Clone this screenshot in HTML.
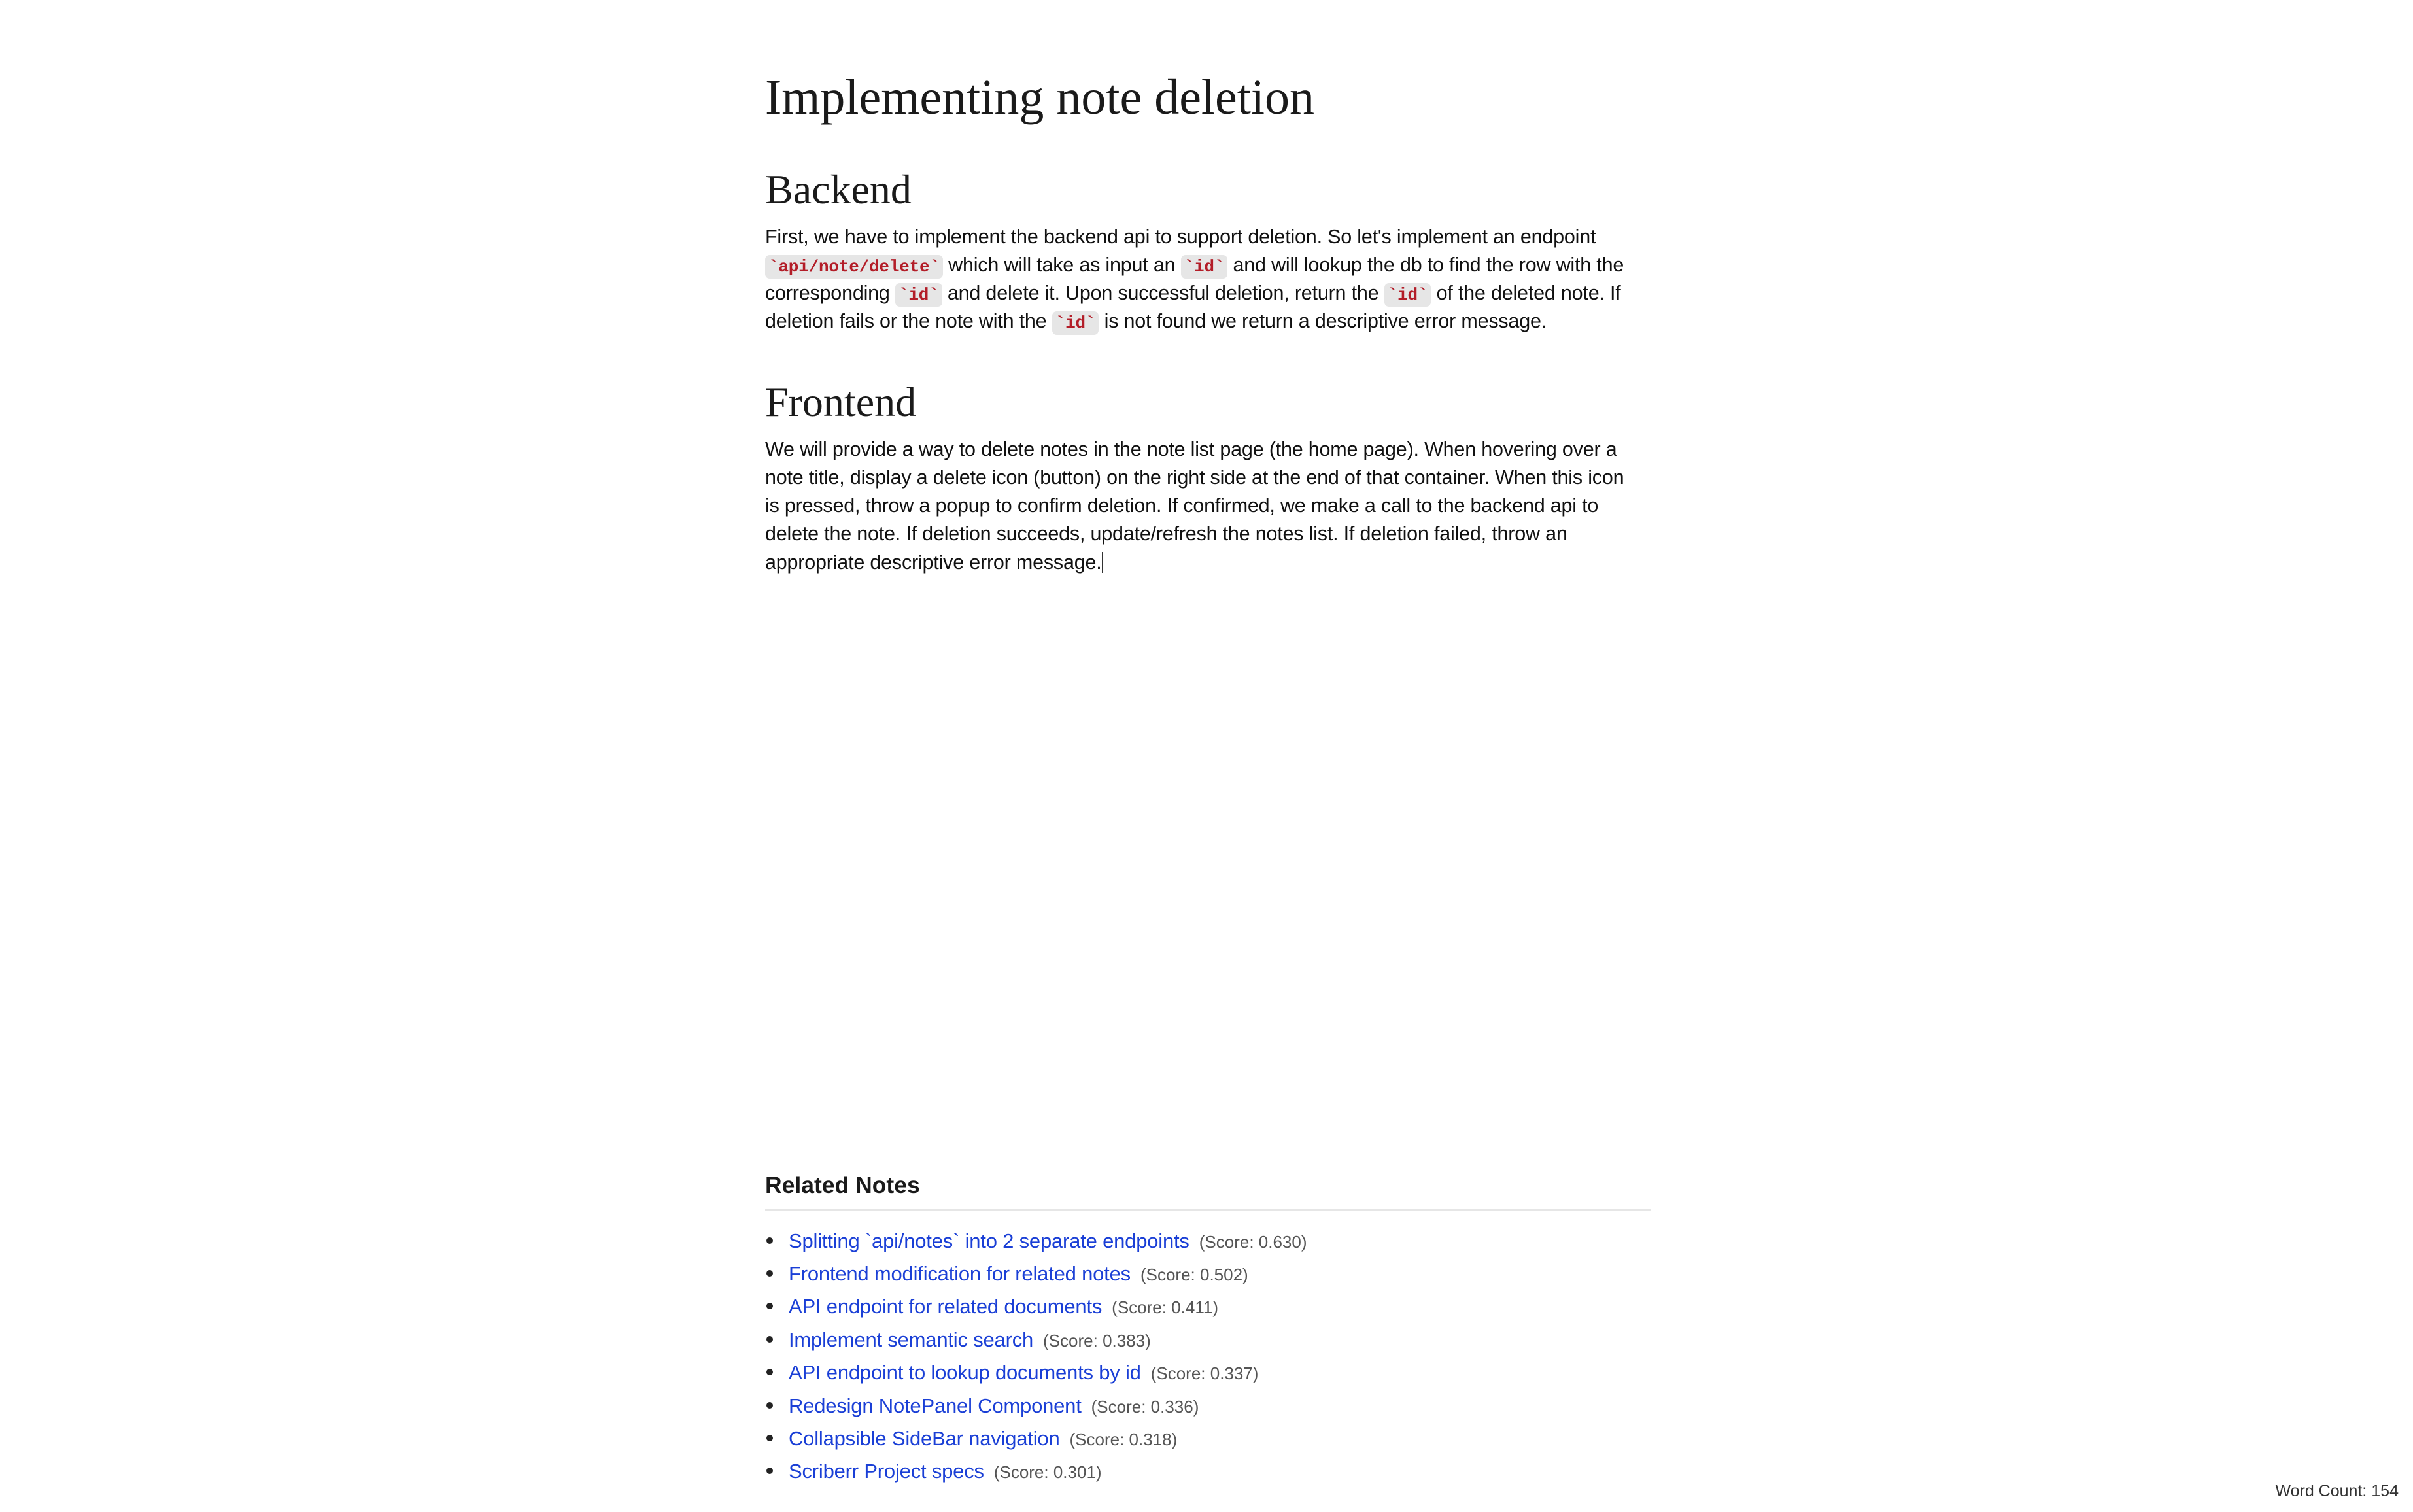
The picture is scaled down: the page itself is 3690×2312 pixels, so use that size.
<!DOCTYPE html>
<html><head><meta charset="utf-8"><style>
html,body{margin:0;padding:0;background:#fff;width:3690px;height:2312px;overflow:hidden;position:relative}
.a{position:absolute;white-space:nowrap;line-height:1}
.h1{font-family:"Liberation Serif",serif;font-size:76px;color:#1a1a1a;left:1170px;top:111px}
.h2{font-family:"Liberation Serif",serif;font-size:64px;color:#1a1a1a;left:1170px}
.p{font-family:"Liberation Sans",sans-serif;font-size:30.5px;color:#111;left:1170px;letter-spacing:-0.2px}
code{font-family:"Liberation Mono",monospace;font-weight:bold;color:#b31d28;background:#e6e6e6;border-radius:7px;padding:3px 5px;font-size:26px}
.rn{font-family:"Liberation Sans",sans-serif;font-weight:bold;font-size:35.5px;color:#1a1a1a;left:1170px;top:1795px}
.hr{position:absolute;left:1170px;top:1849px;width:1355px;height:3px;background:#e6e6e6}
.li{font-family:"Liberation Sans",sans-serif;font-size:31px;left:1172px;color:#1a1a1a}
.li .d{display:inline-block;width:10px;height:10px;border-radius:50%;background:#222;margin-right:24px;vertical-align:middle;position:relative;top:-3px}
.li a{color:#1a3fd6;text-decoration:none;letter-spacing:-0.2px}
.li s{text-decoration:none;color:#555;font-size:26px;margin-left:15px}
.wc{font-family:"Liberation Sans",sans-serif;font-size:25px;color:#333;right:22px;top:2268px}
</style></head><body>
<div class="a h1">Implementing note deletion</div>
<div class="a h2" style="top:258px">Backend</div>
<div class="a p" style="top:347px">First, we have to implement the backend api to support deletion. So let's implement an endpoint</div>
<div class="a p" style="top:390px"><code>`api/note/delete`</code> which will take as input an <code>`id`</code> and will lookup the db to find the row with the</div>
<div class="a p" style="top:433px">corresponding <code>`id`</code> and delete it. Upon successful deletion, return the <code>`id`</code> of the deleted note. If</div>
<div class="a p" style="top:476px">deletion fails or the note with the <code>`id`</code> is not found we return a descriptive error message.</div>
<div class="a h2" style="top:583px">Frontend</div>
<div class="a p" style="top:672px">We will provide a way to delete notes in the note list page (the home page). When hovering over a</div>
<div class="a p" style="top:715px">note title, display a delete icon (button) on the right side at the end of that container. When this icon</div>
<div class="a p" style="top:758px">is pressed, throw a popup to confirm deletion. If confirmed, we make a call to the backend api to</div>
<div class="a p" style="top:801px">delete the note. If deletion succeeds, update/refresh the notes list. If deletion failed, throw an</div>
<div class="a p" style="top:844px">appropriate descriptive error message.<span style="display:inline-block;width:2px;height:32px;background:#333;vertical-align:-6px"></span></div>
<div class="a rn">Related Notes</div>
<div class="hr"></div>
<div class="a li" style="top:1882px"><span class="d"></span><a>Splitting `api/notes` into 2 separate endpoints</a><s>(Score: 0.630)</s></div>
<div class="a li" style="top:1932px"><span class="d"></span><a>Frontend modification for related notes</a><s>(Score: 0.502)</s></div>
<div class="a li" style="top:1982px"><span class="d"></span><a>API endpoint for related documents</a><s>(Score: 0.411)</s></div>
<div class="a li" style="top:2033px"><span class="d"></span><a>Implement semantic search</a><s>(Score: 0.383)</s></div>
<div class="a li" style="top:2083px"><span class="d"></span><a>API endpoint to lookup documents by id</a><s>(Score: 0.337)</s></div>
<div class="a li" style="top:2134px"><span class="d"></span><a>Redesign NotePanel Component</a><s>(Score: 0.336)</s></div>
<div class="a li" style="top:2184px"><span class="d"></span><a>Collapsible SideBar navigation</a><s>(Score: 0.318)</s></div>
<div class="a li" style="top:2234px"><span class="d"></span><a>Scriberr Project specs</a><s>(Score: 0.301)</s></div>
<div class="a wc">Word Count: 154</div>
</body></html>
